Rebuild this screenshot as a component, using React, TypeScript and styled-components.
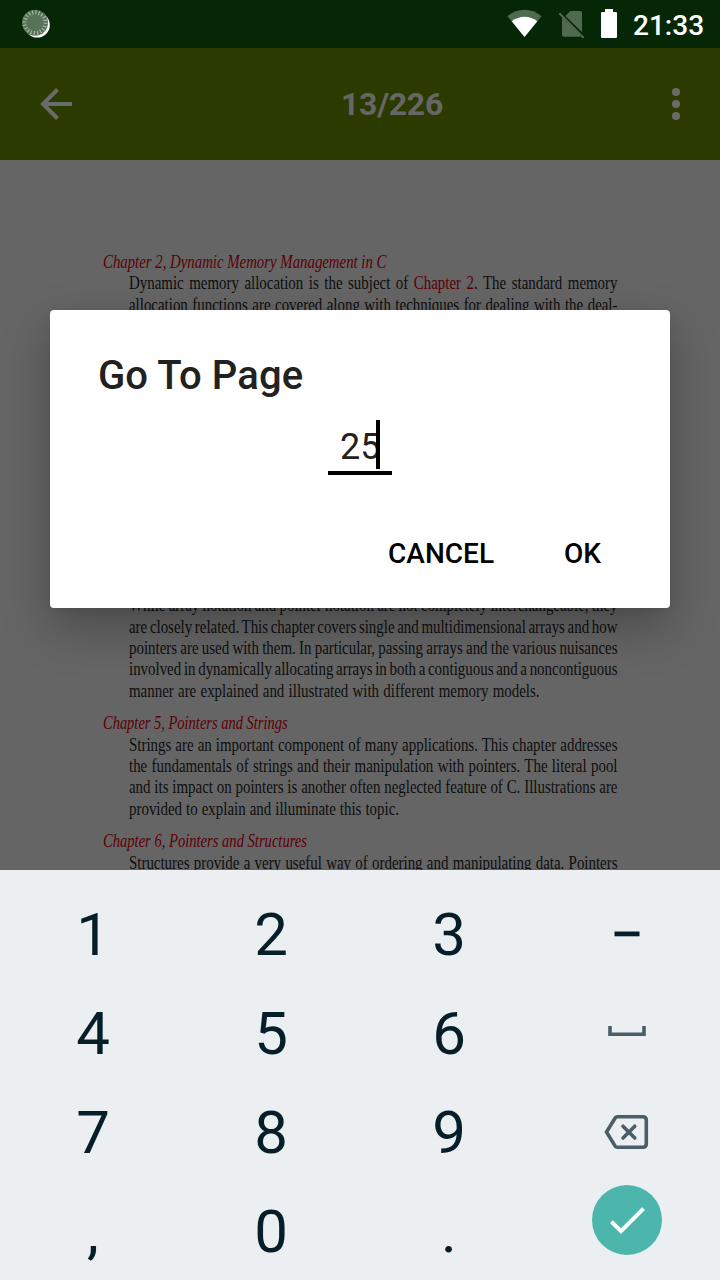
import React from 'react';
import styled, { createGlobalStyle } from 'styled-components';

const GlobalStyle = createGlobalStyle`
  * { box-sizing: border-box; }
  body { margin: 0; font-family: Roboto, sans-serif; background: #666; }
`;

const Screen = styled.div`
  position: relative;
  width: 720px;
  height: 1280px;
  overflow: hidden;
  display: flex;
  flex-direction: column;
  background: #656565;
`;

const StatusBar = styled.header`
  height: 48px;
  flex: none;
  display: flex;
  align-items: center;
  justify-content: space-between;
  padding: 0 15px 0 20px;
  background: #062706;
  color: #fff;
`;

const StatusIcons = styled.div`
  display: flex;
  align-items: center;
`;

const Clock = styled.time`
  width: 72px;
  margin-left: 16px;
  font-size: 28px;
  line-height: 48px;
  font-weight: 500;
  padding-top: 3px;
`;

const AppBar = styled.nav`
  height: 112px;
  flex: none;
  display: flex;
  align-items: center;
  justify-content: space-between;
  padding: 0 36px 0 32px;
  background: #2b3b00;
  color: #6a6a6a;
`;

const PageCount = styled.h1`
  margin: 0 0 0 36px;
  font-size: 32px;
  font-weight: 700;
  letter-spacing: -0.3px;
  line-height: 40px;
  color: #666;
`;

const Document = styled.main`
  height: 710px;
  flex: none;
  overflow: hidden;
  padding: 91px 0 0 103px;
  font-family: 'Liberation Serif', serif;
`;

const ChapterHeading = styled.h2<{ $scale: number }>`
  margin: 0;
  height: 21.4px;
  width: max-content;
  padding-top: 1px;
  font-size: 18px;
  line-height: 21.4px;
  font-weight: 400;
  font-style: italic;
  color: #5c0005;
  white-space: nowrap;
  transform: scaleX(${(p) => p.$scale});
  transform-origin: 0 50%;
`;

const Paragraph = styled.div<{ $gapAfter: number }>`
  margin: 0 0 ${(p) => p.$gapAfter}px 25.5px;
  color: #0e0e0e;
`;

const LINE_SCALE = 0.82;

const Line = styled.div<{ $width?: number }>`
  height: 21.4px;
  width: ${(p) => (p.$width ?? 488.5) / LINE_SCALE}px;
  padding-top: 1px;
  font-size: 18.2px;
  line-height: 21.4px;
  word-spacing: -1.5px;
  white-space: nowrap;
  text-align: justify;
  text-align-last: justify;
  transform: scaleX(${LINE_SCALE});
  transform-origin: 0 50%;
`;

const ChapterLink = styled.span`
  color: #5c0005;
`;

const Dialog = styled.section`
  position: absolute;
  left: 50px;
  top: 310px;
  width: 620px;
  height: 298px;
  display: flex;
  flex-direction: column;
  padding: 42px 48px 24px;
  border-radius: 4px;
  background: #fff;
  box-shadow: 0 20px 48px rgba(0, 0, 0, 0.26), 0 2px 12px rgba(0, 0, 0, 0.06);
`;

const DialogTitle = styled.h2`
  margin: 0;
  font-size: 40px;
  letter-spacing: 0.1px;
  line-height: 48px;
  font-weight: 500;
  color: #212121;
`;

const PageField = styled.div`
  align-self: center;
  display: flex;
  align-items: center;
  width: 64px;
  height: 55px;
  margin-top: 20px;
  padding-left: 12px;
  border-bottom: 4px solid #000;
  font-size: 36px;
  line-height: 50px;
  color: #212121;
`;

const PageValue = styled.span`
  padding-top: 2px;
`;

const Caret = styled.span`
  flex: none;
  width: 4px;
  height: 49px;
  margin: 0 0 2px -4px;
  background: #000;
`;

const DialogActions = styled.div`
  display: flex;
  justify-content: flex-end;
  gap: 70px;
  margin-top: 59px;
  padding-right: 21px;
`;

const DialogButton = styled.button`
  padding: 0;
  border: 0;
  background: none;
  font: 500 28px/40px Roboto, sans-serif;
  color: #000;
`;

const Keypad = styled.section`
  flex: 1;
  display: grid;
  grid-template-columns: 182px 178px 178px 182px;
  grid-template-rows: 99px 99px 99px 99px;
  padding-top: 14px;
  background: #ebeff2;
`;

const Key = styled.button`
  display: flex;
  align-items: center;
  justify-content: center;
  padding: 2px 0 0;
  border: 0;
  background: none;
  font: 400 60px/70px Roboto, sans-serif;
  color: #051e28;
  &:nth-child(4n + 1) { padding-left: 4px; }
  &:nth-child(4n) { padding: 0 4px 0 0; }
`;

const Confirm = styled.span`
  display: flex;
  width: 70px;
  height: 70px;
  margin-bottom: 21px;
  border-radius: 50%;
  background: #4db6ac;
`;

const SpinnerIcon = () => (
  <svg width="32" height="32" viewBox="0 0 32 32">
    <circle cx="17.2" cy="17" r="12.6" fill="#fff" />
    <circle cx="15" cy="14.7" r="13" fill="#577257" />
    <circle cx="15" cy="14.7" r="10.4" fill="none" stroke="#a9b9a9" strokeWidth="4" strokeDasharray="1.1 2.167" />
  </svg>
);

const WifiIcon = () => (
  <svg width="36" height="30" viewBox="0 0 36 30">
    <path d="M.5 7.2C10.5-1.4 24.5-1.4 34.5 7.2L17.5 28z" fill="#506a50" />
    <path d="M4.7 12.3C12.5 6.2 22.5 6.2 30.3 12.3L17.5 28z" fill="#fff" />
  </svg>
);

const NoSimIcon = () => (
  <svg width="28" height="30" viewBox="0 0 28 30">
    <path d="M7.5 7 12.2 2H22q2 0 2 2v19.3zM4 8.2 23 27q-.5.7-1.5.7H6q-2 0-2-2z" fill="#506a50" />
    <path d="M1.3 4.3 25.7 28.9" stroke="#506a50" strokeWidth="2" />
  </svg>
);

const BatteryIcon = () => (
  <svg width="16" height="29" viewBox="0 0 16 29">
    <path d="M4 0h8v3h3q1 0 1 1v24q0 1-1 1H1q-1 0-1-1V4q0-1 1-1h3z" fill="#fff" />
  </svg>
);

const BatterySlot = styled.span`
  display: flex;
  margin-bottom: 1px;
`;

const StatusGap = styled.span<{ $size: number }>`
  width: ${(p) => p.$size}px;
`;

const BackIcon = () => (
  <svg width="48" height="48" viewBox="0 0 48 48" fill="none" stroke="currentColor" strokeWidth="4">
    <path d="M40 24H11M25.5 9.5 11 24l14.5 14.5" />
  </svg>
);

const MoreIcon = () => (
  <svg width="16" height="40" viewBox="0 0 16 40" fill="currentColor">
    <circle cx="8" cy="8" r="4" />
    <circle cx="8" cy="20" r="4" />
    <circle cx="8" cy="32" r="4" />
  </svg>
);

const MinusIcon = () => (
  <svg width="26" height="6" viewBox="0 0 26 6">
    <path d="M.5.5h25v4.8H.5z" fill="#051e28" />
  </svg>
);

const SpaceIcon = () => (
  <svg width="38" height="14" viewBox="0 0 38 14">
    <path d="M2 0v8.3h34V0" fill="none" stroke="#4b5e67" strokeWidth="3.6" />
  </svg>
);

const DeleteIcon = () => (
  <svg width="46" height="36" viewBox="0 0 46 36" fill="none" stroke="#4b5e67" strokeWidth="3.6">
    <path d="M13.5 2.8H38.8q3.5 0 3.5 3.5v23.5q0 3.5-3.5 3.5H13.5q-1.6 0-2.5-1.4L2.5 18 11 4.2q.9-1.4 2.5-1.4Z" />
    <path d="m19 12.2 11.8 11.8m0-11.8L19 24" strokeLinecap="round" />
  </svg>
);

const CheckIcon = () => (
  <svg width="70" height="70" viewBox="0 0 70 70" fill="none" stroke="#fff" strokeWidth="4">
    <path d="m19.4 36.6 9.6 9.6 22.5-22.5" />
  </svg>
);

export default function App() {
  return (
    <>
      <GlobalStyle />
      <Screen>
        <StatusBar>
          <SpinnerIcon />
          <StatusIcons>
            <WifiIcon />
            <StatusGap $size={15} />
            <NoSimIcon />
            <StatusGap $size={15} />
            <BatterySlot><BatteryIcon /></BatterySlot>
            <Clock>21:33</Clock>
          </StatusIcons>
        </StatusBar>
        <AppBar>
          <BackIcon />
          <PageCount>13/226</PageCount>
          <MoreIcon />
        </AppBar>
        <Document>
          <ChapterHeading $scale={0.823}>Chapter 2, Dynamic Memory Management in C</ChapterHeading>
          <Paragraph $gapAfter={279}>
            <Line>
              Dynamic memory allocation is the subject of <ChapterLink>Chapter 2</ChapterLink>. The standard memory
            </Line>
            <Line>allocation functions are covered along with techniques for dealing with the deal-</Line>
          </Paragraph>
          <Paragraph $gapAfter={11.2}>
            <Line>While array notation and pointer notation are not completely interchangeable, they</Line>
            <Line>are closely related. This chapter covers single and multidimensional arrays and how</Line>
            <Line>pointers are used with them. In particular, passing arrays and the various nuisances</Line>
            <Line>involved in dynamically allocating arrays in both a contiguous and a noncontiguous</Line>
            <Line $width={410.5}>manner are explained and illustrated with different memory models.</Line>
          </Paragraph>
          <ChapterHeading $scale={0.804}>Chapter 5, Pointers and Strings</ChapterHeading>
          <Paragraph $gapAfter={11.2}>
            <Line>Strings are an important component of many applications. This chapter addresses</Line>
            <Line>the fundamentals of strings and their manipulation with pointers. The literal pool</Line>
            <Line>and its impact on pointers is another often neglected feature of C. Illustrations are</Line>
            <Line $width={270}>provided to explain and illuminate this topic.</Line>
          </Paragraph>
          <ChapterHeading $scale={0.81}>Chapter 6, Pointers and Structures</ChapterHeading>
          <Paragraph $gapAfter={0}>
            <Line>Structures provide a very useful way of ordering and manipulating data. Pointers</Line>
          </Paragraph>
        </Document>
        <Keypad>
          <Key>1</Key>
          <Key>2</Key>
          <Key>3</Key>
          <Key aria-label="Minus"><MinusIcon /></Key>
          <Key>4</Key>
          <Key>5</Key>
          <Key>6</Key>
          <Key aria-label="Space"><SpaceIcon /></Key>
          <Key>7</Key>
          <Key>8</Key>
          <Key>9</Key>
          <Key aria-label="Delete"><DeleteIcon /></Key>
          <Key>,</Key>
          <Key>0</Key>
          <Key>.</Key>
          <Key aria-label="Done"><Confirm><CheckIcon /></Confirm></Key>
        </Keypad>
        <Dialog role="dialog">
          <DialogTitle>Go To Page</DialogTitle>
          <PageField><PageValue>25</PageValue><Caret /></PageField>
          <DialogActions>
            <DialogButton>CANCEL</DialogButton>
            <DialogButton>OK</DialogButton>
          </DialogActions>
        </Dialog>
      </Screen>
    </>
  );
}
